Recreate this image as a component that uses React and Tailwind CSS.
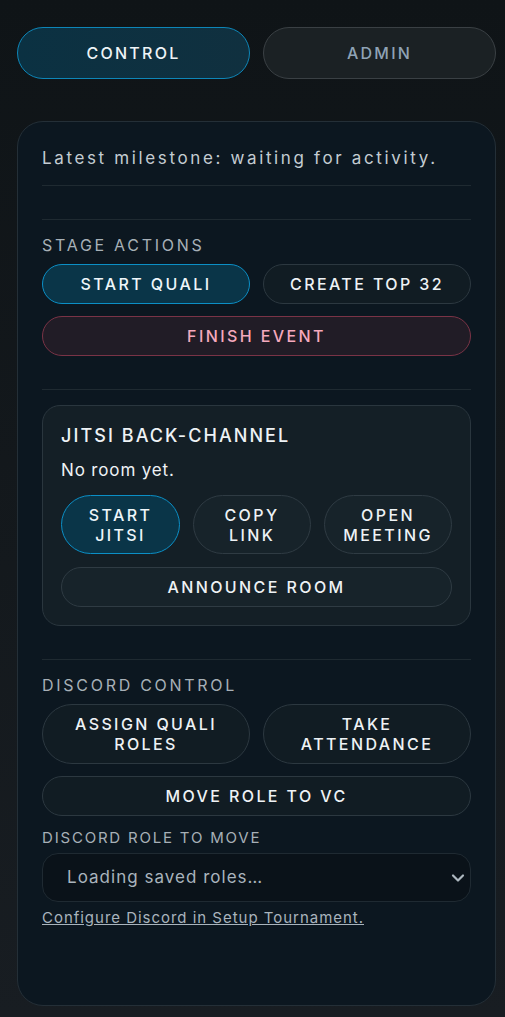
import React from 'react';

const font = { fontFamily: 'Inter, "Noto Sans", sans-serif' };

function Btn({ children, tone = 'plain', className = '' }) {
    const tones = {
        active: 'bg-[#0a3548] border-[#0b8fc6] text-[#eef6fa]',
        plain: 'bg-[#111c23] border-[#2c3840] text-[#eef2f5]',
        box: 'bg-[#17232a] border-[#2f3b43] text-[#eef2f5]',
        danger: 'bg-[#211c26] border-[#7a3346] text-[#f5a9bd]',
    };
    return (
        <button
            className={`rounded-full border text-[16px] font-medium uppercase tracking-[0.15em] leading-[20px] ${tones[tone]} ${className}`}
        >
            {children}
        </button>
    );
}

export default function App() {
    return (
        <div
            className="min-h-[1017px] bg-gradient-to-b from-[#0f1417] to-[#181d22] pl-[17px] pr-[9px] pt-[27px] pb-[12px]"
            style={font}
        >
            {/* TABS */}
            <div className="grid grid-cols-2 gap-[13px]">
                <button className="h-[52px] rounded-full border border-[#0d86b8] bg-gradient-to-r from-[#0b3142] to-[#10303f] text-[16px] font-medium tracking-[0.14em] text-[#eef4f7]">
                    CONTROL
                </button>
                <button className="h-[52px] rounded-full border border-[#3a4044] bg-[#1b2124] text-[16px] font-medium tracking-[0.14em] text-[#8fa3b5]">
                    ADMIN
                </button>
            </div>

            {/* CARD */}
            <div className="mt-[42px] h-[885px] rounded-[26px] border border-[#242f37] bg-[#0c1720] px-[24px] pt-[24px]">
                <p className="text-[17px] tracking-[0.155em] leading-[24px] text-[#c4ccd2]">
                    Latest milestone: waiting for activity.
                </p>
                <div className="mt-[15px] h-px bg-[#1f2a31]"></div>
                <div className="mt-[33px] h-px bg-[#1f2a31]"></div>

                {/* STAGE ACTIONS */}
                <h3 className="mt-[15px] text-[16px] leading-[20px] tracking-[0.17em] text-[#a7b0b7]">STAGE ACTIONS</h3>
                <div className="mt-[9px] grid grid-cols-2 gap-[13px]">
                    <Btn tone="active" className="h-[40px]">Start Quali</Btn>
                    <Btn className="h-[40px]">Create Top 32</Btn>
                </div>
                <Btn tone="danger" className="mt-[12px] h-[40px] w-full">Finish Event</Btn>
                <div className="mt-[33px] h-px bg-[#1f2a31]"></div>

                {/* JITSI */}
                <div className="mt-[15px] rounded-[18px] border border-[#2a363e] bg-[#141f26] px-[18px] pt-[19px] pb-[18px]">
                    <h3 className="text-[18px] leading-[22px] font-medium tracking-[0.115em] text-[#eef2f5]">JITSI BACK-CHANNEL</h3>
                    <p className="mt-[12px] text-[17px] leading-[22px] tracking-[0.05em] text-[#eef2f5]">No room yet.</p>
                    <div className="mt-[14px] grid grid-cols-[119px_118px_128px] gap-[13px]">
                        <Btn tone="active" className="h-[59px] px-3">Start Jitsi</Btn>
                        <Btn tone="box" className="h-[59px] px-3">Copy Link</Btn>
                        <Btn tone="box" className="h-[59px] px-2">Open Meeting</Btn>
                    </div>
                    <Btn tone="box" className="mt-[13px] h-[40px] w-full">Announce Room</Btn>
                </div>

                <div className="mt-[33px] h-px bg-[#1f2a31]"></div>

                {/* DISCORD */}
                <h3 className="mt-[15px] text-[16px] leading-[20px] tracking-[0.17em] text-[#a7b0b7]">DISCORD CONTROL</h3>
                <div className="mt-[9px] grid grid-cols-2 gap-[13px]">
                    <Btn className="h-[60px] px-6">Assign Quali Roles</Btn>
                    <Btn className="h-[60px] px-6">Take Attendance</Btn>
                </div>
                <Btn className="mt-[12px] h-[40px] w-full">Move Role to VC</Btn>
                <label className="mt-[13px] block text-[15px] leading-[18px] tracking-[0.12em] text-[#a7b0b7]">DISCORD ROLE TO MOVE</label>
                <div className="mt-[6px] flex h-[49px] items-center justify-between rounded-[16px] border border-[#1f2a32] bg-[#0a1219] pl-[24px] pr-[2px]">
                    <span className="text-[17px] tracking-[0.06em] text-[#a9b4bd]">Loading saved roles…</span>
                    <svg width="20" height="20" viewBox="0 0 24 24" fill="none" stroke="#aeb8c0" strokeWidth="2.6" strokeLinecap="round" strokeLinejoin="round">
                        <path d="M6 9l6 6 6-6" />
                    </svg>
                </div>
                <a href="#" className="mt-[7px] inline-block text-[15px] leading-[18px] tracking-[0.065em] text-[#a9b4bd] underline">
                    Configure Discord in Setup Tournament.
                </a>
            </div>
        </div>
    );
}
